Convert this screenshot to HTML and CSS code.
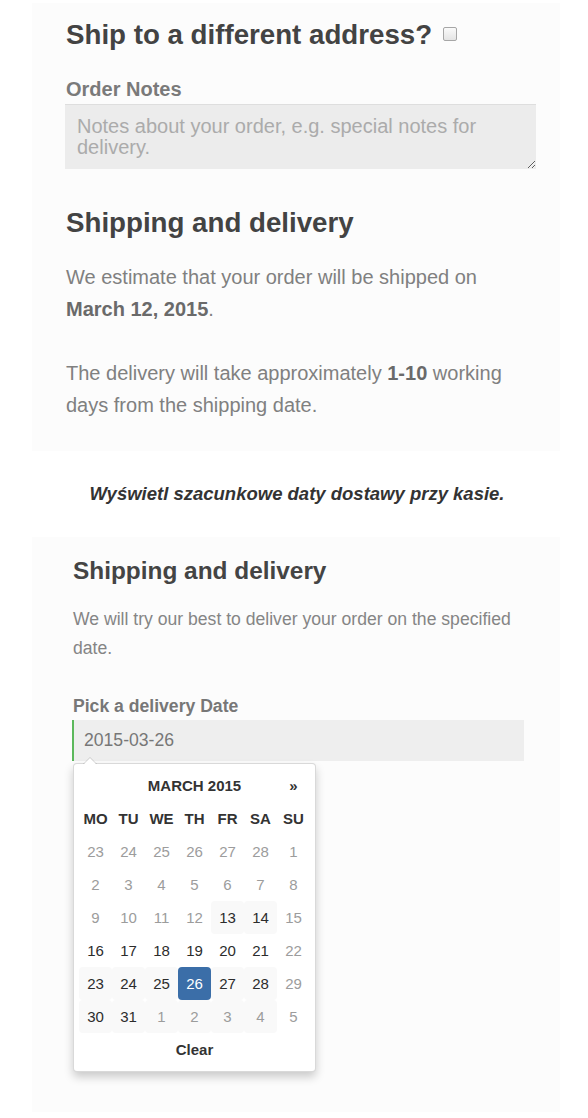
FILE: index.html
```html
<!DOCTYPE html>
<html lang="en">
<head>
<meta charset="utf-8">
<title>Shipping and delivery</title>
<link rel="stylesheet" href="styles.css">
</head>
<body>
<section class="panel panel-checkout">
  <h3 class="ship-heading">Ship to a different address? <span class="checkbox"></span></h3>
  <label class="notes-label" for="notes">Order Notes</label>
  <textarea id="notes" class="notes" placeholder="Notes about your order, e.g. special notes for delivery."></textarea>
  <h3 class="section-title">Shipping and delivery</h3>
  <p class="estimate">We estimate that your order will be shipped on <strong>March 12, 2015</strong>.</p>
  <p class="estimate estimate-next">The delivery will take approximately <strong>1-10</strong> working days from the shipping date.</p>
</section>

<p class="caption">Wyświetl szacunkowe daty dostawy przy kasie.</p>

<section class="panel panel-picker">
  <h3 class="picker-title">Shipping and delivery</h3>
  <p class="picker-text">We will try our best to deliver your order on the specified date.</p>
  <label class="picker-label" for="date">Pick a delivery Date</label>
  <div class="date-field">
    <div class="date-input" id="date">2015-03-26</div>
    <div class="datepicker">
      <table class="cal">
        <thead>
          <tr class="cal-head">
            <th></th>
            <th colspan="5" class="cal-month">MARCH 2015</th>
            <th class="cal-next">»</th>
          </tr>
          <tr class="cal-dow">
            <th>MO</th><th>TU</th><th>WE</th><th>TH</th><th>FR</th><th>SA</th><th>SU</th>
          </tr>
        </thead>
        <tbody>
          <tr><td class="off">23</td><td class="off">24</td><td class="off">25</td><td class="off">26</td><td class="off">27</td><td class="off">28</td><td class="off">1</td></tr>
          <tr><td class="off">2</td><td class="off">3</td><td class="off">4</td><td class="off">5</td><td class="off">6</td><td class="off">7</td><td class="off">8</td></tr>
          <tr><td class="off">9</td><td class="off">10</td><td class="off">11</td><td class="off">12</td><td class="day tint">13</td><td class="day tint">14</td><td class="off">15</td></tr>
          <tr><td class="day">16</td><td class="day">17</td><td class="day">18</td><td class="day">19</td><td class="day">20</td><td class="day">21</td><td class="off">22</td></tr>
          <tr><td class="day tint">23</td><td class="day tint">24</td><td class="day tint">25</td><td class="day active">26</td><td class="day tint">27</td><td class="day tint">28</td><td class="off">29</td></tr>
          <tr><td class="day tint">30</td><td class="day tint">31</td><td class="off tint">1</td><td class="off tint">2</td><td class="off tint">3</td><td class="off tint">4</td><td class="off">5</td></tr>
        </tbody>
        <tfoot>
          <tr><th colspan="7" class="cal-clear">Clear</th></tr>
        </tfoot>
      </table>
    </div>
  </div>
</section>
</body>
</html>
```
FILE: styles.css
```css
html, body {
  margin: 0;
  padding: 0;
  background: #ffffff;
}

body {
  font-family: "Liberation Sans", Arial, sans-serif;
  color: #444444;
  overflow: hidden;
}

.panel {
  margin-left: 32px;
  width: 528px;
  background: #fcfcfc;
  box-sizing: border-box;
}

.panel-checkout {
  margin-top: 3px;
  padding: 16px 24px 30px 34px;
}

.ship-heading,
.section-title {
  margin: 0;
  font-size: 27.7px;
  line-height: 32px;
  font-weight: bold;
  color: #434343;
}

.checkbox {
  display: inline-block;
  width: 12px;
  height: 12px;
  margin-left: 3px;
  vertical-align: 3px;
  border: 1px solid #a6a6a6;
  border-radius: 2px;
  background: linear-gradient(#fafafa, #e4e4e4);
}

.notes-label {
  display: block;
  margin-top: 26px;
  font-size: 20px;
  line-height: 24px;
  font-weight: bold;
  color: #7a7a7a;
}

.notes {
  display: block;
  box-sizing: border-box;
  width: 471px;
  height: 65px;
  margin: 3px 0 0 -1px;
  padding: 11px 12px;
  border: none;
  border-top: 1px solid #dedede;
  background: #ececec;
  font-family: "Liberation Sans", Arial, sans-serif;
  font-size: 20px;
  line-height: 21px;
  color: #777777;
  outline: none;
}

.notes::placeholder {
  color: #ababab;
}

.section-title {
  margin-top: 38px;
}

.estimate {
  margin: 22px 0 0;
  max-width: 460px;
  font-size: 20px;
  line-height: 32px;
  color: #808080;
}

.estimate strong {
  color: #6a6a6a;
}

.estimate-next {
  margin-top: 32px;
}

.caption {
  margin: 0;
  padding: 32px 0 32px 6px;
  text-align: center;
  font-size: 18.5px;
  line-height: 22px;
  font-weight: bold;
  font-style: italic;
  color: #333333;
}

.panel-picker {
  height: 575px;
  padding: 20px 36px 0 41px;
}

.picker-title {
  margin: 0;
  font-size: 24.4px;
  line-height: 28px;
  font-weight: bold;
  color: #444444;
}

.picker-text {
  margin: 20px 0 0;
  max-width: 452px;
  font-size: 17.6px;
  line-height: 29px;
  color: #858585;
}

.picker-label {
  display: block;
  margin-top: 32px;
  font-size: 17.6px;
  line-height: 22px;
  font-weight: bold;
  color: #777777;
}

.date-field {
  position: relative;
  margin: 3px 0 0 -1px;
}

.date-input {
  box-sizing: border-box;
  width: 452px;
  height: 41px;
  padding: 0 10px;
  border-left: 2px solid #5cb85c;
  background: #eeeeee;
  font-size: 17.6px;
  line-height: 41px;
  color: #777777;
}

.datepicker {
  position: absolute;
  top: 43px;
  left: 1px;
  padding: 5px;
  background: #ffffff;
  border: 1px solid rgba(0, 0, 0, 0.15);
  border-radius: 4px;
  box-shadow: 0 5px 10px rgba(0, 0, 0, 0.2);
}

.datepicker::before {
  content: "";
  position: absolute;
  top: -7px;
  left: 9px;
  border-left: 7px solid transparent;
  border-right: 7px solid transparent;
  border-bottom: 7px solid rgba(0, 0, 0, 0.15);
}

.datepicker::after {
  content: "";
  position: absolute;
  top: -6px;
  left: 10px;
  border-left: 6px solid transparent;
  border-right: 6px solid transparent;
  border-bottom: 6px solid #ffffff;
}

.cal {
  border-collapse: separate;
  border-spacing: 0;
  font-size: 15px;
}

.cal th,
.cal td {
  width: 33px;
  height: 33px;
  padding: 0;
  text-align: center;
  line-height: 33px;
  border-radius: 4px;
}

.cal th {
  font-weight: bold;
  color: #333333;
}

.cal-month {
  width: auto;
}

.cal td.off {
  color: #9c9c9c;
}

.cal td.day {
  color: #2c2c2c;
}

.cal td.tint {
  background: #f9f9f9;
}

.cal td.active {
  background: #3b6ea8;
  color: #ffffff;
}

.cal-clear {
  color: #333333;
}
```
